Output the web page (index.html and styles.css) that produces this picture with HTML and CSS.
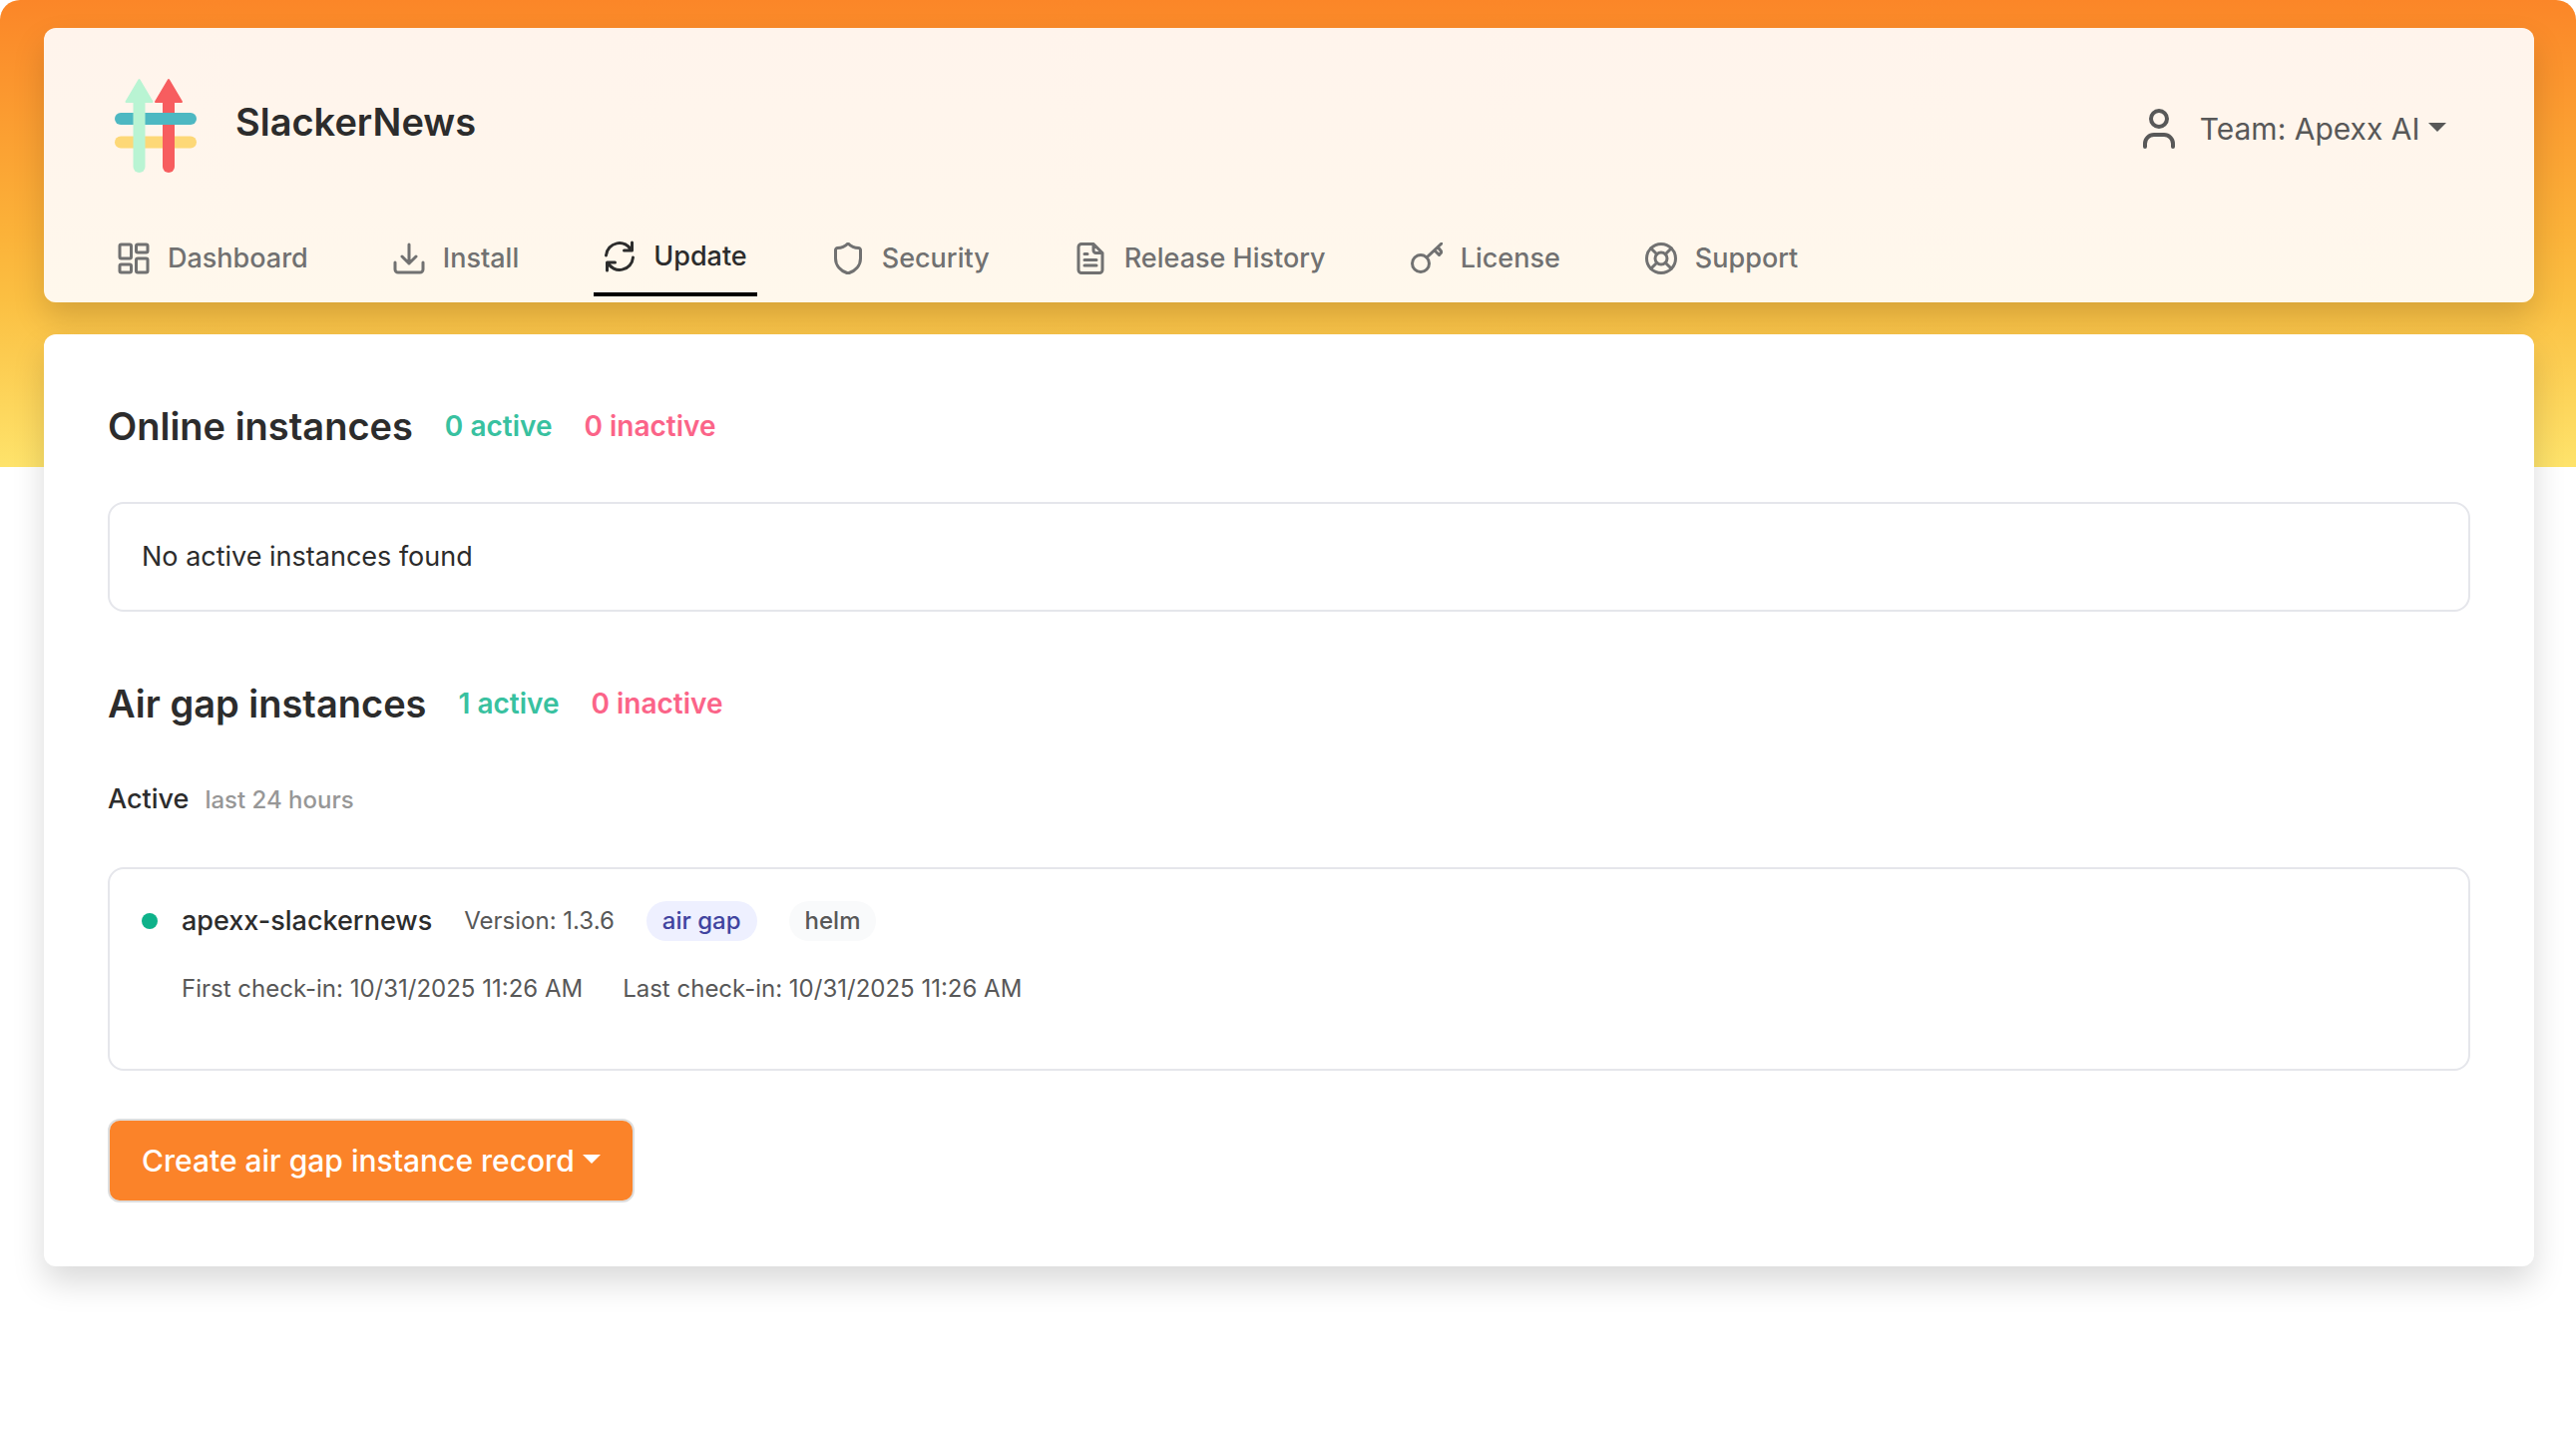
FILE: index.html
```html
<!DOCTYPE html>
<html lang="en">
<head>
  <meta charset="utf-8">
  <meta name="viewport" content="width=device-width, initial-scale=1">
  <title>SlackerNews - Update</title>
  <link rel="stylesheet" href="styles.css">
</head>
<body>
  <div class="page">
    <header class="card header">
      <div class="header-top">
        <svg class="logo" viewBox="0 0 84 96" aria-hidden="true">
          <path d="M7 42H77" stroke="#4db8c2" stroke-width="12" stroke-linecap="round"/>
          <path d="M7 65.500H77" stroke="#fdd877" stroke-width="12" stroke-linecap="round"/>
          <path d="M25.500 22V90" stroke="#b9f4d3" stroke-width="12" stroke-linecap="round"/>
          <path d="M25.500 3L38.500 25H12.500Z" fill="#b9f4d3" stroke="#b9f4d3" stroke-width="2" stroke-linejoin="round"/>
          <path d="M55 22V36M55 48V90" stroke="#f75d5f" stroke-width="12"/>
          <path d="M55 60V90" stroke="#f75d5f" stroke-width="12" stroke-linecap="round"/>
          <path d="M55 3L68 25H42Z" fill="#f75d5f" stroke="#f75d5f" stroke-width="2" stroke-linejoin="round"/>
        </svg>
        <h1 class="brand">SlackerNews</h1>
        <button class="account" type="button">
          <svg class="account-icon" viewBox="0 0 34 42" aria-hidden="true"><circle cx="17" cy="11" r="8"/><path d="M3 39V36A9 9 0 0 1 12 27H22A9 9 0 0 1 31 36V39"/></svg>
          <span class="menu-label">Team: Apexx AI <span class="caret"></span></span>
        </button>
      </div>
      <nav class="nav">
        <a class="nav-link" href="#dashboard"><svg class="icon" viewBox="0 0 32 32" aria-hidden="true"><rect x="2" y="2" width="11.500" height="14" rx="1.500"/><rect x="18.500" y="2" width="11.500" height="8" rx="1.500"/><rect x="18.500" y="16" width="11.500" height="14" rx="1.500"/><rect x="2" y="22" width="11.500" height="8" rx="1.500"/></svg>Dashboard</a>
        <a class="nav-link" href="#install"><svg class="icon" viewBox="0 0 32 32" aria-hidden="true"><path d="M16 2V21M9 14L16 21L23 14M2 20V27A3 3 0 0 0 5 30H27A3 3 0 0 0 30 27V20"/></svg>Install</a>
        <a class="nav-link active" href="#update" aria-current="page"><svg class="icon" viewBox="0 0 32 32" aria-hidden="true"><path d="M2.500 15A13.500 13.500 0 0 1 28 10M28.500 2V10H20.500M29.500 17A13.500 13.500 0 0 1 4 22M3.500 30V22H11.500"/></svg>Update</a>
        <a class="nav-link" href="#security"><svg class="icon" viewBox="0 0 32 32" aria-hidden="true"><path d="M16 1C13 4 9 5.500 5.500 5.500C4.500 5.500 3.500 6.500 3.500 7.500V16C3.500 23 8.500 28.500 16 31C23.500 28.500 28.500 23 28.500 16V7.500C28.500 6.500 27.500 5.500 26.500 5.500C23 5.500 19 4 16 1Z"/></svg>Security</a>
        <a class="nav-link" href="#history"><svg class="icon" viewBox="0 0 32 32" aria-hidden="true"><path d="M19 1.500H7A3 3 0 0 0 4 4.500V27.500A3 3 0 0 0 7 30.500H25A3 3 0 0 0 28 27.500V10.500L19 1.500V8A2.500 2.500 0 0 0 21.500 10.500H28M10 11.500H13M10 17.500H22M10 23H22"/></svg>Release History</a>
        <a class="nav-link" href="#license"><svg class="icon" viewBox="0 0 32 32" aria-hidden="true"><circle cx="10" cy="21" r="8.500"/><path d="M16 15L31 1M24 8L28.500 12.500L31 9.500L27.500 5"/></svg>License</a>
        <a class="nav-link" href="#support"><svg class="icon" viewBox="0 0 32 32" aria-hidden="true"><circle cx="16" cy="16" r="14.500"/><circle cx="16" cy="16" r="6"/><path d="M5.750 5.750L11.750 11.750M20.250 11.750L26.250 5.750M20.250 20.250L26.250 26.250M11.750 20.250L5.750 26.250"/></svg>Support</a>
      </nav>
    </header>

    <main class="card main">
      <section class="section">
        <div class="section-head">
          <h2 class="section-title">Online instances</h2>
          <span class="count count-active">0 active</span>
          <span class="count count-inactive">0 inactive</span>
        </div>
        <div class="panel"><p class="empty">No active instances found</p></div>
      </section>

      <section class="section">
        <div class="section-head">
          <h2 class="section-title">Air gap instances</h2>
          <span class="count count-active">1 active</span>
          <span class="count count-inactive">0 inactive</span>
        </div>
        <div class="group-head">
          <h3 class="group-title">Active</h3>
          <span class="group-note">last 24 hours</span>
        </div>
        <article class="panel instance">
          <span class="status-dot"></span>
          <div class="instance-body">
            <div class="instance-row">
              <h4 class="instance-name">apexx-slackernews</h4>
              <span class="meta">Version: 1.3.6</span>
              <span class="tag tag-airgap">air gap</span>
              <span class="tag tag-helm">helm</span>
            </div>
            <div class="checkins">
              <span class="meta">First check-in: 10/31/2025 11:26 AM</span>
              <span class="meta">Last check-in: 10/31/2025 11:26 AM</span>
            </div>
          </div>
        </article>
        <button class="create" type="button">Create air gap instance record <span class="caret"></span></button>
      </section>
    </main>
  </div>
</body>
</html>
```

FILE: styles.css
```css
* {
  box-sizing: border-box;
}

body {
  margin: 0;
  background: #fff;
  color: #2c2c2c;
  font-family: Inter, "Liberation Sans", sans-serif;
  font-size: 27px;
  line-height: 40px;
}

h1, h2, h3, h4, p {
  margin: 0;
}

button {
  font: inherit;
  cursor: pointer;
}

.page {
  display: flex;
  flex-direction: column;
  gap: 32px;
  padding: 28px 42px 80px 44px;
  border-radius: 20px 20px 0 0;
  background: linear-gradient(#fb8628, #fbb239 234px, #fbbf42 300px, #fee36b 468px) no-repeat 0 0 / 100% 468px;
}

.card {
  border-radius: 12px;
  background: #fff;
  box-shadow: 0 16px 32px rgba(0, 0, 0, 0.15);
}

/* Header */
.header {
  padding: 49px 64px 6px;
  background: linear-gradient(#fff4ec, #fff6ec 60%, #fff8ec);
}

.header-top {
  display: flex;
  align-items: center;
}

.logo {
  width: 84px;
  height: 96px;
  margin-left: 6px;
}

.brand {
  margin: 0 0 6px 38px;
  font-size: 38px;
  font-weight: 600;
  line-height: 48px;
}

.account {
  display: flex;
  align-items: center;
  gap: 24px;
  margin: 8px 24px 0 auto;
  padding: 0;
  border: 0;
  background: none;
  color: #585858;
  font-size: 30px;
}

.account-icon {
  width: 34px;
  height: 42px;
  fill: none;
  stroke: currentColor;
  stroke-width: 4px;
  stroke-linecap: round;
}

.caret {
  display: inline-block;
  border: 9px solid transparent;
  border-top-color: currentColor;
  border-bottom: 0;
  vertical-align: 8px;
}

.nav {
  display: flex;
  align-items: center;
  gap: 65px;
  height: 76px;
  margin-top: 48px;
}

.nav-link {
  display: flex;
  align-items: center;
  gap: 18px;
  height: 72px;
  padding: 0 10px;
  color: #717171;
  font-weight: 500;
  text-decoration: none;
  white-space: nowrap;
}

.nav-link.active {
  height: 76px;
  border-bottom: 4px solid #000;
  color: #2c2c2c;
}

.icon {
  flex: none;
  width: 32px;
  height: 32px;
  fill: none;
  stroke: currentColor;
  stroke-width: 3px;
  stroke-linecap: round;
  stroke-linejoin: round;
}

/* Content */
.main {
  display: flex;
  flex-direction: column;
  gap: 64px;
  padding: 64px;
}

.section {
  display: flex;
  flex-direction: column;
  align-items: stretch;
  gap: 48px;
}

.section-head {
  display: flex;
  align-items: center;
  gap: 32px;
}

.section-title {
  font-size: 38px;
  font-weight: 600;
  line-height: 56px;
}

.count {
  font-size: 28px;
  font-weight: 600;
}

.count-active {
  color: #38c1a0;
}

.count-inactive {
  color: #fb6488;
}

.panel {
  padding: 32px;
  border: 2px solid #e5e6eb;
  border-radius: 16px;
}

.empty {
  line-height: 42px;
}

.group-head {
  display: flex;
  align-items: baseline;
  gap: 16px;
}

.group-title {
  font-size: 27px;
  font-weight: 500;
}

.group-note {
  color: #979797;
  font-size: 24px;
  font-weight: 500;
  line-height: 32px;
}

.instance {
  display: flex;
  gap: 24px;
  padding-bottom: 60px;
}

.status-dot {
  flex: none;
  width: 16px;
  height: 16px;
  margin-top: 12px;
  border-radius: 50%;
  background: #0eb28a;
}

.instance-row {
  display: flex;
  align-items: center;
  gap: 32px;
}

.instance-name {
  font-size: 27px;
  font-weight: 500;
}

.meta {
  color: #585858;
  font-size: 24px;
}

.tag {
  padding: 0 16px;
  border-radius: 20px;
  font-size: 24px;
  font-weight: 500;
}

.tag-airgap {
  background: #eef0ff;
  color: #4144a0;
}

.tag-helm {
  background: #f9fafb;
  color: #585858;
}

.checkins {
  display: flex;
  gap: 40px;
  margin-top: 28px;
}

.create {
  align-self: flex-start;
  height: 84px;
  padding: 0 32px;
  border: 2px solid #dedede;
  border-radius: 12px;
  background: #fb8329;
  color: #fff;
  font-size: 30px;
  font-weight: 500;
}
```
